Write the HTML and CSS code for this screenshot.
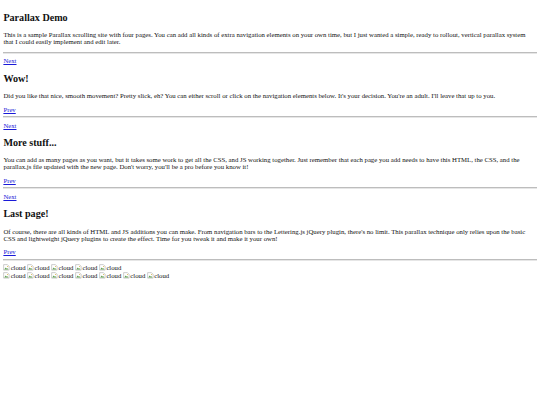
FILE: index.html
```html
<!DOCTYPE html>
<html>
<head>
<meta charset="utf-8">
<title>Parallax Demo</title>
<link rel="stylesheet" href="styles.css">
</head>
<body>
<section class="page">
  <h2 class="title">Parallax Demo</h2>
  <p class="text">This is a sample Parallax scrolling site with four pages. You can add all kinds of extra navigation elements on your own time, but I just wanted a simple, ready to rollout, vertical parallax system that I could easily implement and edit later.</p>
</section>
<hr class="rule">
<section class="page">
  <a class="nav" href="#">Next</a>
  <h2 class="title">Wow!</h2>
  <p class="text">Did you like that nice, smooth movement? Pretty slick, eh? You can either scroll or click on the navigation elements below. It's your decision. You're an adult. I'll leave that up to you.</p>
  <a class="nav" href="#">Prev</a>
</section>
<hr class="rule">
<section class="page">
  <a class="nav" href="#">Next</a>
  <h2 class="title">More stuff...</h2>
  <p class="text">You can add as many pages as you want, but it takes some work to get all the CSS, and JS working together. Just remember that each page you add needs to have this HTML, the CSS, and the parallax.js file updated with the new page. Don't worry, you'll be a pro before you know it!</p>
  <a class="nav" href="#">Prev</a>
</section>
<hr class="rule">
<section class="page">
  <a class="nav" href="#">Next</a>
  <h2 class="title">Last page!</h2>
  <p class="text">Of course, there are all kinds of HTML and JS additions you can make. From navigation bars to the Lettering.js jQuery plugin, there's no limit. This parallax technique only relies upon the basic CSS and lightweight jQuery plugins to create the effect. Time for you tweak it and make it your own!</p>
  <a class="nav" href="#">Prev</a>
</section>
<hr class="rule">
<div class="clouds">
  <div class="cloud-row">
    <span class="cloud"><svg class="broken" viewBox="0 0 16 16"><path d="M1.5 1.5h9l4 4v9h-13z" fill="#fff" stroke="#8a8a8a"/><path d="M3 13l3.5-4.5 2.5 3 1.5-1.5 2.5 3z" fill="#5a9a4a"/><circle cx="11" cy="6" r="1.3" fill="#d9b040"/></svg>cloud</span>
    <span class="cloud"><svg class="broken" viewBox="0 0 16 16"><path d="M1.5 1.5h9l4 4v9h-13z" fill="#fff" stroke="#8a8a8a"/><path d="M3 13l3.5-4.5 2.5 3 1.5-1.5 2.5 3z" fill="#5a9a4a"/><circle cx="11" cy="6" r="1.3" fill="#d9b040"/></svg>cloud</span>
    <span class="cloud"><svg class="broken" viewBox="0 0 16 16"><path d="M1.5 1.5h9l4 4v9h-13z" fill="#fff" stroke="#8a8a8a"/><path d="M3 13l3.5-4.5 2.5 3 1.5-1.5 2.5 3z" fill="#5a9a4a"/><circle cx="11" cy="6" r="1.3" fill="#d9b040"/></svg>cloud</span>
    <span class="cloud"><svg class="broken" viewBox="0 0 16 16"><path d="M1.5 1.5h9l4 4v9h-13z" fill="#fff" stroke="#8a8a8a"/><path d="M3 13l3.5-4.5 2.5 3 1.5-1.5 2.5 3z" fill="#5a9a4a"/><circle cx="11" cy="6" r="1.3" fill="#d9b040"/></svg>cloud</span>
    <span class="cloud"><svg class="broken" viewBox="0 0 16 16"><path d="M1.5 1.5h9l4 4v9h-13z" fill="#fff" stroke="#8a8a8a"/><path d="M3 13l3.5-4.5 2.5 3 1.5-1.5 2.5 3z" fill="#5a9a4a"/><circle cx="11" cy="6" r="1.3" fill="#d9b040"/></svg>cloud</span>
  </div>
  <div class="cloud-row">
    <span class="cloud"><svg class="broken" viewBox="0 0 16 16"><path d="M1.5 1.5h9l4 4v9h-13z" fill="#fff" stroke="#8a8a8a"/><path d="M3 13l3.5-4.5 2.5 3 1.5-1.5 2.5 3z" fill="#5a9a4a"/><circle cx="11" cy="6" r="1.3" fill="#d9b040"/></svg>cloud</span>
    <span class="cloud"><svg class="broken" viewBox="0 0 16 16"><path d="M1.5 1.5h9l4 4v9h-13z" fill="#fff" stroke="#8a8a8a"/><path d="M3 13l3.5-4.5 2.5 3 1.5-1.5 2.5 3z" fill="#5a9a4a"/><circle cx="11" cy="6" r="1.3" fill="#d9b040"/></svg>cloud</span>
    <span class="cloud"><svg class="broken" viewBox="0 0 16 16"><path d="M1.5 1.5h9l4 4v9h-13z" fill="#fff" stroke="#8a8a8a"/><path d="M3 13l3.5-4.5 2.5 3 1.5-1.5 2.5 3z" fill="#5a9a4a"/><circle cx="11" cy="6" r="1.3" fill="#d9b040"/></svg>cloud</span>
    <span class="cloud"><svg class="broken" viewBox="0 0 16 16"><path d="M1.5 1.5h9l4 4v9h-13z" fill="#fff" stroke="#8a8a8a"/><path d="M3 13l3.5-4.5 2.5 3 1.5-1.5 2.5 3z" fill="#5a9a4a"/><circle cx="11" cy="6" r="1.3" fill="#d9b040"/></svg>cloud</span>
    <span class="cloud"><svg class="broken" viewBox="0 0 16 16"><path d="M1.5 1.5h9l4 4v9h-13z" fill="#fff" stroke="#8a8a8a"/><path d="M3 13l3.5-4.5 2.5 3 1.5-1.5 2.5 3z" fill="#5a9a4a"/><circle cx="11" cy="6" r="1.3" fill="#d9b040"/></svg>cloud</span>
    <span class="cloud"><svg class="broken" viewBox="0 0 16 16"><path d="M1.5 1.5h9l4 4v9h-13z" fill="#fff" stroke="#8a8a8a"/><path d="M3 13l3.5-4.5 2.5 3 1.5-1.5 2.5 3z" fill="#5a9a4a"/><circle cx="11" cy="6" r="1.3" fill="#d9b040"/></svg>cloud</span>
    <span class="cloud"><svg class="broken" viewBox="0 0 16 16"><path d="M1.5 1.5h9l4 4v9h-13z" fill="#fff" stroke="#8a8a8a"/><path d="M3 13l3.5-4.5 2.5 3 1.5-1.5 2.5 3z" fill="#5a9a4a"/><circle cx="11" cy="6" r="1.3" fill="#d9b040"/></svg>cloud</span>
  </div>
</div>
</body>
</html>
```
FILE: styles.css
```css
html { background: #fff; }
body {
  margin: 3.375px;
  font-family: "Liberation Serif", "Times New Roman", serif;
  font-size: 6.75px;
  color: #111;
}
.title {
  font-size: 10.125px;
  font-weight: bold;
  margin: 8.4px 0;
}
.text { margin: 6.75px 0; }
.nav { color: #1a1ad8; text-decoration: underline; }
.rule {
  border: none;
  border-top: 1px solid #bdbdbd;
  border-bottom: 1px solid #e6e6e6;
  margin: 3.375px 0;
  height: 0;
}
.cloud { display: inline-flex; align-items: center; }
.broken { width: 6.75px; height: 6.75px; margin-right: 0.5px; }
```
